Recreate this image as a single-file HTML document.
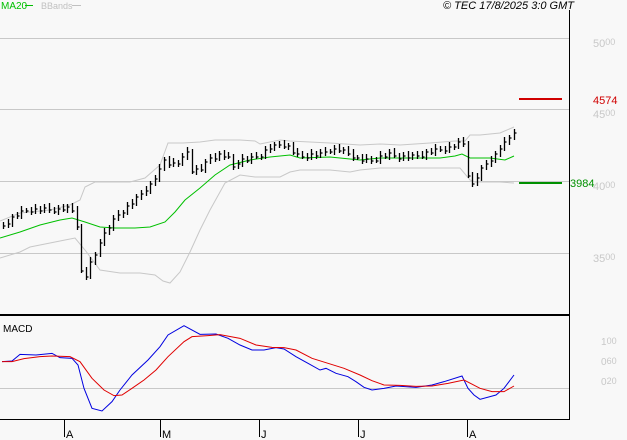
<!DOCTYPE html>
<html><head><style>
html,body{margin:0;padding:0;background:#f8f8f8}
svg{display:block;font-family:"Liberation Sans",sans-serif}
</style></head><body>
<svg id="s" width="627" height="440" xmlns="http://www.w3.org/2000/svg">
<rect width="627" height="440" fill="#f8f8f8"/>
<g stroke="#c8c8c8" stroke-width="1">
<line x1="0" y1="38.5" x2="569" y2="38.5"/>
<line x1="0" y1="109.5" x2="569" y2="109.5"/>
<line x1="0" y1="181.5" x2="569" y2="181.5"/>
<line x1="0" y1="253.5" x2="569" y2="253.5"/>
<line x1="0" y1="388.5" x2="569" y2="388.5"/>
</g>
<line x1="569.5" y1="10" x2="569.5" y2="420" stroke="#000"/>
<line x1="0" y1="315" x2="569" y2="315" stroke="#000" stroke-width="2"/>
<line x1="0" y1="419.5" x2="569" y2="419.5" stroke="#000"/>
<g stroke="#000"><line x1="64.5" y1="420" x2="64.5" y2="437"/><line x1="160.5" y1="420" x2="160.5" y2="437"/><line x1="259.5" y1="420" x2="259.5" y2="437"/><line x1="358.5" y1="420" x2="358.5" y2="437"/><line x1="467.5" y1="420" x2="467.5" y2="437"/></g>
<g font-size="11" fill="#000"><text x="66" y="438">A</text><text x="162" y="438">M</text><text x="261" y="438">J</text><text x="360" y="438">J</text><text x="469" y="438">A</text></g>
<text x="1" y="9" font-size="10" fill="#00c000">MA20</text><line x1="25" y1="5.5" x2="33" y2="5.5" stroke="#00c000"/>
<text x="41" y="9" font-size="9" fill="#c0c0c0">BBands</text><line x1="72" y1="5.5" x2="81" y2="5.5" stroke="#c0c0c0"/>
<text x="574" y="9" font-size="11" font-style="italic" fill="#000" text-anchor="end">© TEC 17/8/2025 3:0 GMT</text>
<text x="3" y="332" font-size="10" fill="#000">MACD</text>
<g font-size="11" fill="#c8c8c8"><text x="593" y="47">50<tspan font-size="9" dy="-2">00</tspan></text><text x="593" y="118">45<tspan font-size="9" dy="-2">00</tspan></text><text x="593" y="190">40<tspan font-size="9" dy="-2">00</tspan></text><text x="593" y="262">35<tspan font-size="9" dy="-2">00</tspan></text>
<text x="601" y="345" font-size="10">1<tspan font-size="9" dy="-1">00</tspan></text><text x="601" y="365" font-size="10">0<tspan font-size="9" dy="-1">60</tspan></text><text x="601" y="385" font-size="10">0<tspan font-size="9" dy="-1">20</tspan></text></g>
<line x1="519" y1="99" x2="562" y2="99" stroke="#d00000" stroke-width="2"/>
<text x="593" y="104" font-size="11" fill="#d00000">4574</text>
<line x1="519" y1="183" x2="562" y2="183" stroke="#009000" stroke-width="2"/>
<text x="570" y="187" font-size="11" fill="#009000">3984</text>
<g id="g"></g>
</svg>
<script>
var g=document.getElementById('g'),NS='http://www.w3.org/2000/svg';
function pl(p,c,w){var e=document.createElementNS(NS,'polyline');e.setAttribute('points',p.map(function(a){return a[0]+','+a[1]}).join(' '));e.setAttribute('fill','none');e.setAttribute('stroke',c);e.setAttribute('stroke-width',w||1);g.appendChild(e);}
function interp(k,x){for(var i=0;i<k.length-1;i++){if(x>=k[i][0]&&x<=k[i+1][0]){var t=(x-k[i][0])/(k[i+1][0]-k[i][0]);return k[i][1]+t*(k[i+1][1]-k[i][1]);}}return k[k.length-1][1];}
pl([[0,221],[20,213],[30,212],[50,210],[70,205],[80,200],[85,187],[95,182],[130,182],[145,178],[160,165],[168,143],[183,143],[200,142],[215,140],[240,140],[255,141],[260,144],[280,140],[290,141],[330,143],[360,145],[380,144],[400,145],[430,143],[455,141],[465,141],[470,135],[480,135],[500,133],[514,127]],'#c8c8c8');
pl([[0,258],[20,252],[30,247],[50,243],[65,240],[75,238],[85,250],[100,270],[120,273],[140,273],[155,275],[163,281],[170,283],[180,272],[190,252],[200,230],[210,210],[225,183],[240,175],[255,177],[280,177],[290,172],[300,170],[330,170],[350,172],[360,170],[380,168],[400,168],[430,168],[460,168],[470,180],[475,182],[500,182],[514,183]],'#c8c8c8');
pl([[0,238],[20,232],[40,225],[60,220],[72,218],[85,222],[100,227],[115,228],[135,228],[150,227],[165,222],[175,212],[185,200],[200,188],[215,175],[230,165],[250,160],[270,157],[290,155],[300,158],[330,157],[360,160],[380,158],[400,158],[420,158],[440,158],[455,156],[462,154],[470,158],[490,158],[505,160],[514,156]],'#00c000');
var k=[[3,226],[10,220],[20,213],[30,210],[45,210],[60,210],[70,208],[76,217],[80,268],[84,283],[88,268],[95,255],[100,240],[110,225],[120,213],[130,205],[140,195],[150,185],[160,170],[165,158],[170,165],[180,162],[187,152],[190,170],[200,170],[210,158],[220,155],[228,158],[232,168],[240,160],[250,160],[260,155],[270,148],[280,145],[285,145],[290,148],[295,155],[300,158],[310,155],[320,155],[330,150],[340,150],[350,155],[360,160],[370,162],[380,157],[390,155],[400,157],[410,157],[420,155],[430,152],[440,150],[450,148],[460,143],[465,145],[468,178],[472,185],[475,180],[480,172],[485,165],[490,160],[495,155],[500,148],[505,143],[510,137],[514,130]];
var d='',prev=226,n=0;
for(var x=3;x<=514;x+=4.6){n++;var xi=Math.round(x)+0.5,y=interp(k,x)+((n*7)%5-2);var hi=Math.min(prev,y)-3-(n%3),lo=Math.max(prev,y)+2+(n%2);d+='M'+xi+' '+hi.toFixed(0)+'V'+lo.toFixed(0)+'M'+xi+' '+y.toFixed(0)+'h2';prev=y;}
var p=document.createElementNS(NS,'path');p.setAttribute('d',d);p.setAttribute('stroke','#000');p.setAttribute('fill','none');p.setAttribute('stroke-width','1.3');g.appendChild(p);
function cv(a){return a.map(function(q){return [q[0]/2.5,300+q[1]/3]});}
pl(cv([[5,185],[30,183],[50,163],[90,165],[130,160],[150,173],[180,175],[195,195],[210,265],[230,325],[255,333],[280,305],[300,270],[330,225],[370,180],[400,140],[420,105],[460,77],[500,103],[540,102],[570,115],[600,135],[630,150],[660,150],[690,143],[710,147],[740,170],[770,190],[800,210],[815,205],[840,220],[870,230],[890,245],[910,262],[930,270],[960,265],[990,258],[1040,262],[1080,255],[1110,245],[1155,228],[1170,265],[1185,285],[1200,298],[1240,285],[1260,265],[1285,225]]),'#0000e0');
pl(cv([[5,185],[30,185],[60,176],[100,170],[130,168],[175,170],[200,185],[230,235],[260,270],[285,287],[305,285],[330,265],[360,240],[390,210],[420,170],[460,125],[480,110],[520,107],[550,104],[600,115],[640,135],[680,142],[710,143],[740,150],[780,175],[820,190],[860,205],[900,225],[930,242],[960,255],[1000,256],[1040,259],[1080,258],[1120,250],[1160,240],[1200,265],[1230,275],[1260,275],[1285,258]]),'#e00000');
</script>
</body></html>
